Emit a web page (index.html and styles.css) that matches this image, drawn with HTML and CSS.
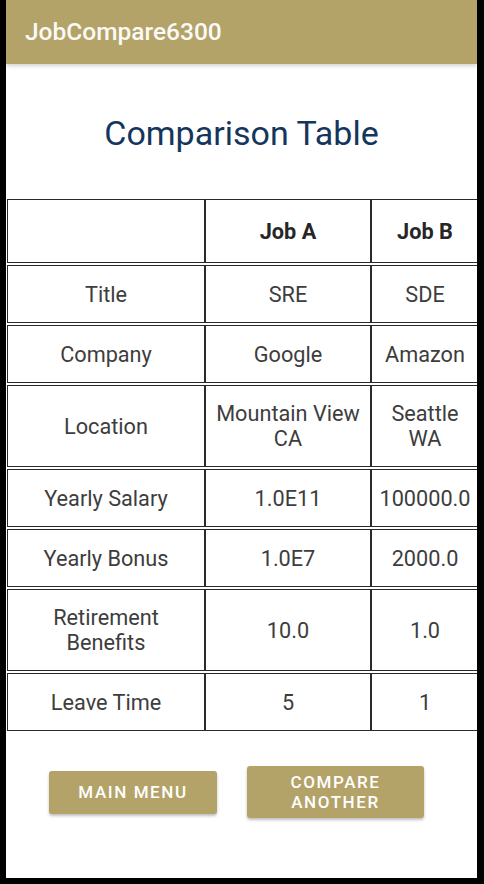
FILE: index.html
```html
<!DOCTYPE html>
<html>
<head>
<meta charset="utf-8">
<link rel="stylesheet" href="styles.css">
</head>
<body>
<div class="screen">
  <header class="appbar">JobCompare6300</header>
  <main class="content">
    <h1 class="heading">Comparison Table</h1>
    <div class="table">
      <div class="row head">
        <div class="cell c1"></div>
        <div class="cell c2">Job A</div>
        <div class="cell c3">Job B</div>
      </div>
      <div class="row">
        <div class="cell c1">Title</div>
        <div class="cell c2">SRE</div>
        <div class="cell c3">SDE</div>
      </div>
      <div class="row">
        <div class="cell c1">Company</div>
        <div class="cell c2">Google</div>
        <div class="cell c3">Amazon</div>
      </div>
      <div class="row tall">
        <div class="cell c1">Location</div>
        <div class="cell c2">Mountain View<br>CA</div>
        <div class="cell c3">Seattle<br>WA</div>
      </div>
      <div class="row">
        <div class="cell c1">Yearly Salary</div>
        <div class="cell c2">1.0E11</div>
        <div class="cell c3">100000.0</div>
      </div>
      <div class="row">
        <div class="cell c1">Yearly Bonus</div>
        <div class="cell c2">1.0E7</div>
        <div class="cell c3">2000.0</div>
      </div>
      <div class="row tall">
        <div class="cell c1">Retirement<br>Benefits</div>
        <div class="cell c2">10.0</div>
        <div class="cell c3">1.0</div>
      </div>
      <div class="row">
        <div class="cell c1">Leave Time</div>
        <div class="cell c2">5</div>
        <div class="cell c3">1</div>
      </div>
    </div>
    <div class="actions">
      <button class="btn main">MAIN MENU</button>
      <button class="btn compare">COMPARE<br>ANOTHER</button>
    </div>
  </main>
</div>
</body>
</html>
```

FILE: styles.css
```css
html, body {
  margin: 0;
  padding: 0;
  background: #000;
}
body {
  font-family: Roboto, "Liberation Sans", sans-serif;
  width: 484px;
  height: 884px;
  overflow: hidden;
}
.screen {
  margin-left: 6px;
  width: 471px;
  height: 878px;
  background: #fff;
  overflow: hidden;
  display: flex;
  flex-direction: column;
}
.appbar {
  height: 64px;
  flex: none;
  background: #b3a369;
  color: #fbfaf6;
  font-size: 24.5px;
  font-weight: 500;
  line-height: 64px;
  padding-left: 19px;
  box-shadow: 0 2px 4px rgba(0,0,0,0.18);
  position: relative;
  z-index: 1;
}
.content {
  flex: 1;
  display: flex;
  flex-direction: column;
}
.heading {
  margin: 0;
  padding-top: 50px;
  height: 85px;
  box-sizing: border-box;
  margin-bottom: 50px;
  text-align: center;
  font-size: 34px;
  font-weight: 400;
  line-height: 38px;
  color: #14365d;
}
.table {
  margin-left: 1px;
  width: 490px;
  display: flex;
  flex-direction: column;
  gap: 2px;
}
.row {
  display: flex;
  height: 58px;
}
.row.head {
  height: 64px;
}
.row.tall {
  height: 82px;
}
.cell {
  box-sizing: border-box;
  border: 1px solid #2a2a2a;
  display: flex;
  align-items: center;
  justify-content: center;
  text-align: center;
  font-size: 21.7px;
  line-height: 25px;
  color: #3d3d3d;
}
.c1 { width: 198px; }
.c2 { width: 166px; }
.c3 { width: 108px; }
.head .cell {
  font-weight: 700;
  color: #262626;
}
.actions {
  display: flex;
  justify-content: center;
  align-items: center;
  gap: 30px;
  margin-top: 35px;
  padding-right: 10px;
}
.btn {
  border: none;
  border-radius: 3px;
  background: #b3a369;
  color: #fff;
  font-family: Roboto, "Liberation Sans", sans-serif;
  font-size: 17px;
  font-weight: 500;
  letter-spacing: 1.6px;
  line-height: 20px;
  box-shadow: 0 2px 3px rgba(0,0,0,0.25);
  padding: 0;
}
.btn.main {
  width: 168px;
  height: 43px;
}
.btn.compare {
  width: 177px;
  height: 52px;
}
```
